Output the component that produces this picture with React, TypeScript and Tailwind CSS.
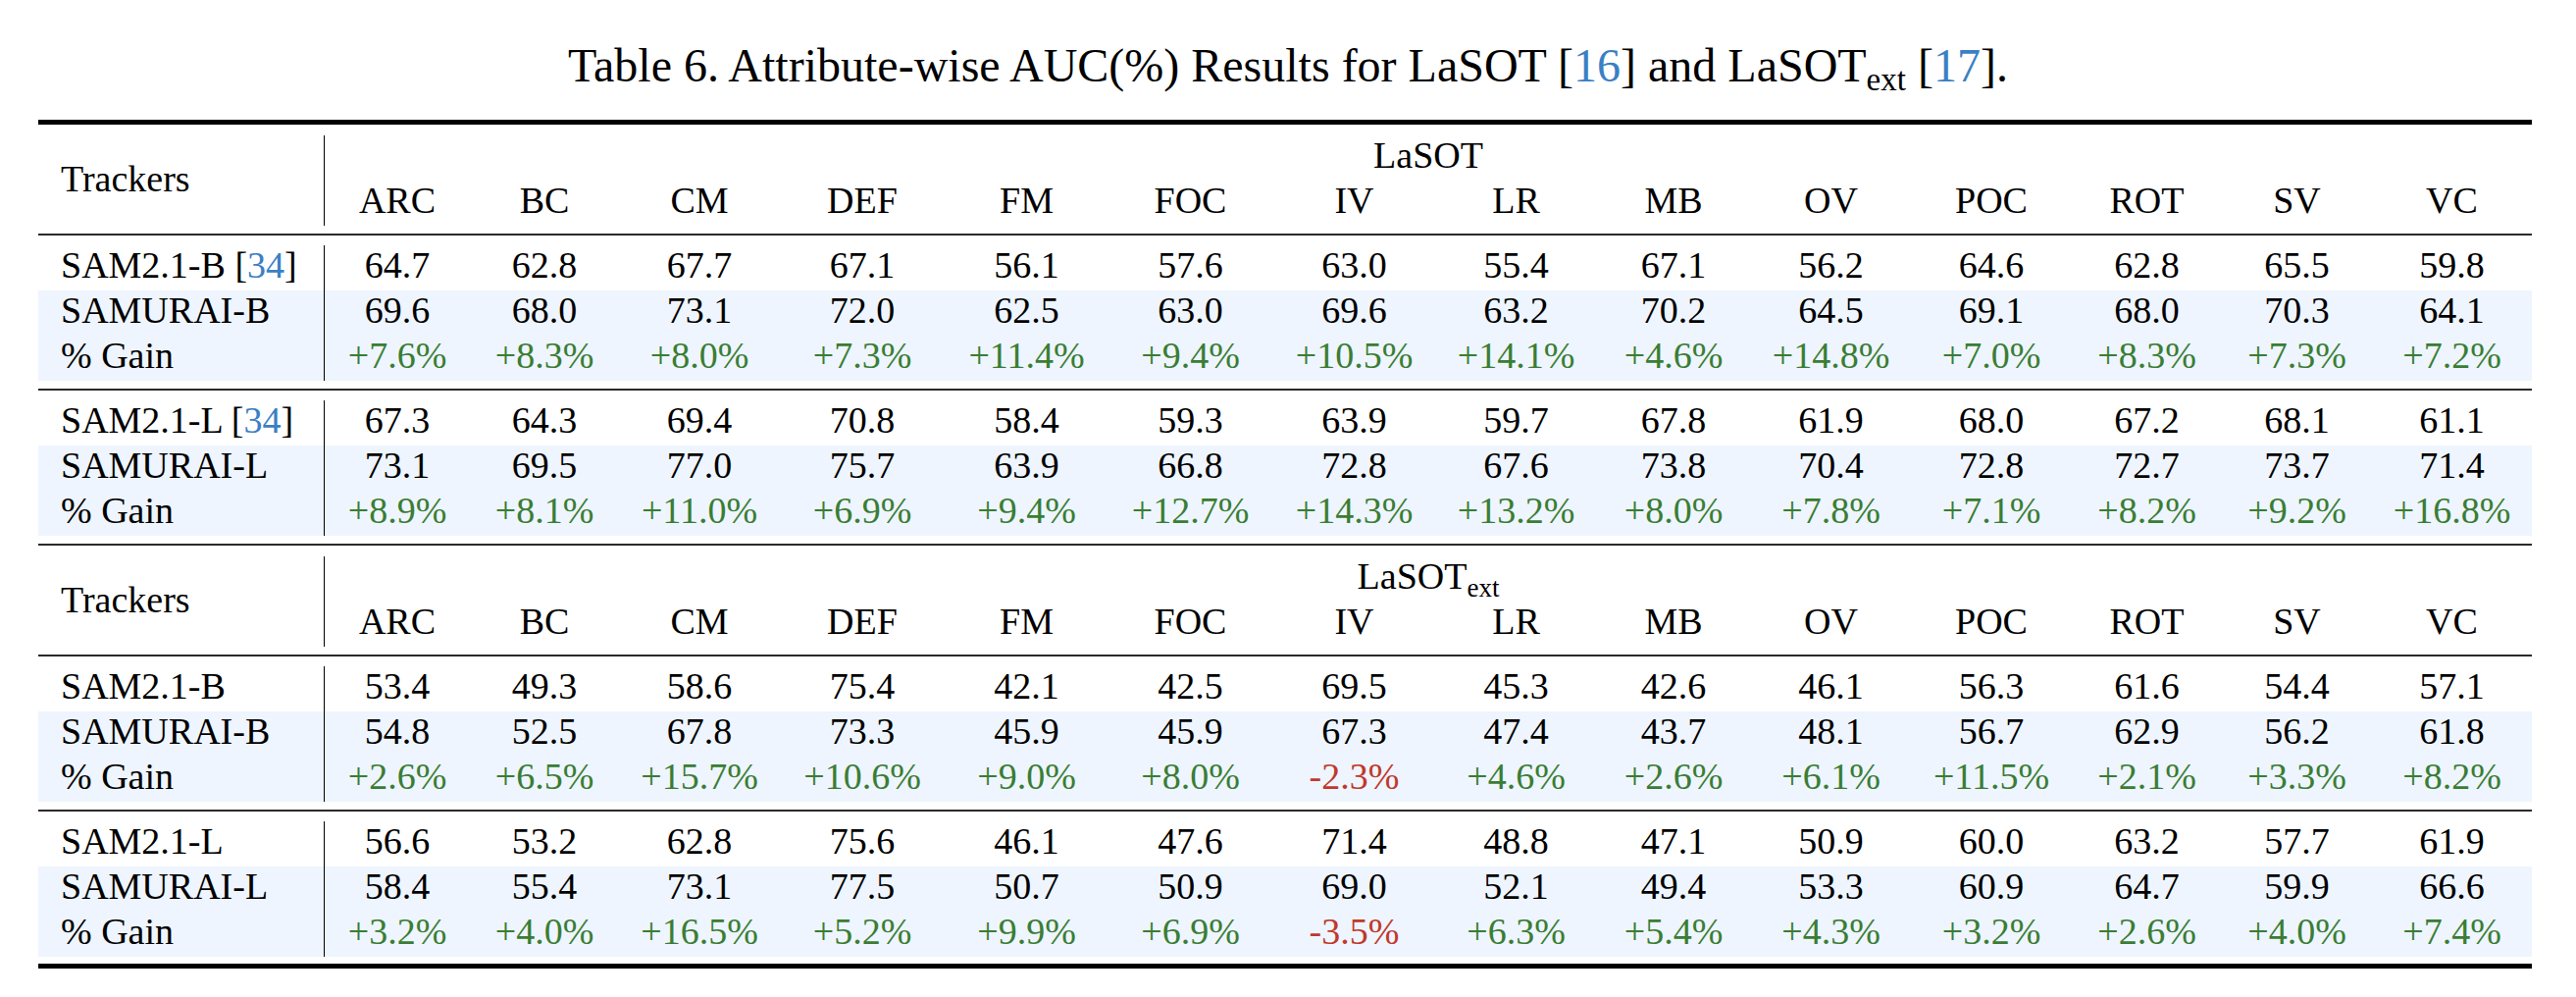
import React from 'react';

const attrs = ['ARC', 'BC', 'CM', 'DEF', 'FM', 'FOC', 'IV', 'LR', 'MB', 'OV', 'POC', 'ROT', 'SV', 'VC'];
// column widths measured from the page, the last one takes what is left
const widths = ['w-[148px]', 'w-[152px]', 'w-[164px]', 'w-[168px]', 'w-[167px]', 'w-[167px]', 'w-[167px]', 'w-[163px]', 'w-[158px]', 'w-[163px]', 'w-[164px]', 'w-[153px]', 'w-[153px]', 'flex-1'];

type Row = { name: string; cite?: string; values: string[]; gain?: boolean };

const lasot: Row[][] = [
  [
    { name: 'SAM2.1-B', cite: '34', values: ['64.7', '62.8', '67.7', '67.1', '56.1', '57.6', '63.0', '55.4', '67.1', '56.2', '64.6', '62.8', '65.5', '59.8'] },
    { name: 'SAMURAI-B', values: ['69.6', '68.0', '73.1', '72.0', '62.5', '63.0', '69.6', '63.2', '70.2', '64.5', '69.1', '68.0', '70.3', '64.1'] },
    { name: '% Gain', gain: true, values: ['+7.6%', '+8.3%', '+8.0%', '+7.3%', '+11.4%', '+9.4%', '+10.5%', '+14.1%', '+4.6%', '+14.8%', '+7.0%', '+8.3%', '+7.3%', '+7.2%'] },
  ],
  [
    { name: 'SAM2.1-L', cite: '34', values: ['67.3', '64.3', '69.4', '70.8', '58.4', '59.3', '63.9', '59.7', '67.8', '61.9', '68.0', '67.2', '68.1', '61.1'] },
    { name: 'SAMURAI-L', values: ['73.1', '69.5', '77.0', '75.7', '63.9', '66.8', '72.8', '67.6', '73.8', '70.4', '72.8', '72.7', '73.7', '71.4'] },
    { name: '% Gain', gain: true, values: ['+8.9%', '+8.1%', '+11.0%', '+6.9%', '+9.4%', '+12.7%', '+14.3%', '+13.2%', '+8.0%', '+7.8%', '+7.1%', '+8.2%', '+9.2%', '+16.8%'] },
  ],
];

const lasotExt: Row[][] = [
  [
    { name: 'SAM2.1-B', values: ['53.4', '49.3', '58.6', '75.4', '42.1', '42.5', '69.5', '45.3', '42.6', '46.1', '56.3', '61.6', '54.4', '57.1'] },
    { name: 'SAMURAI-B', values: ['54.8', '52.5', '67.8', '73.3', '45.9', '45.9', '67.3', '47.4', '43.7', '48.1', '56.7', '62.9', '56.2', '61.8'] },
    { name: '% Gain', gain: true, values: ['+2.6%', '+6.5%', '+15.7%', '+10.6%', '+9.0%', '+8.0%', '-2.3%', '+4.6%', '+2.6%', '+6.1%', '+11.5%', '+2.1%', '+3.3%', '+8.2%'] },
  ],
  [
    { name: 'SAM2.1-L', values: ['56.6', '53.2', '62.8', '75.6', '46.1', '47.6', '71.4', '48.8', '47.1', '50.9', '60.0', '63.2', '57.7', '61.9'] },
    { name: 'SAMURAI-L', values: ['58.4', '55.4', '73.1', '77.5', '50.7', '50.9', '69.0', '52.1', '49.4', '53.3', '60.9', '64.7', '59.9', '66.6'] },
    { name: '% Gain', gain: true, values: ['+3.2%', '+4.0%', '+16.5%', '+5.2%', '+9.9%', '+6.9%', '-3.5%', '+6.3%', '+5.4%', '+4.3%', '+3.2%', '+2.6%', '+4.0%', '+7.4%'] },
  ],
];

function Cite({ n }: { n: string }) {
  return (
    <>
      [<span className="text-[#3b7fc4]">{n}</span>]
    </>
  );
}

function Header({ ext }: { ext?: boolean }) {
  return (
    <div className="pt-[11px] pb-[8px]">
      <div className="flex h-[92px]">
        <div className="w-[292px] shrink-0 border-r-[1.5px] border-black pl-[23px] pt-[24px] leading-[40px]">Trackers</div>
        <div className="flex flex-1 flex-col">
          <div className="h-[46px] text-center leading-[40px]">
            LaSOT{ext && <sub className="text-[27px] align-baseline relative top-[8px]">ext</sub>}
          </div>
          <div className="flex h-[46px] leading-[40px]">
            {attrs.map((a, i) => (
              <div key={a} className={`${widths[i]} text-center`}>
                {a}
              </div>
            ))}
          </div>
        </div>
      </div>
    </div>
  );
}

function Group({ rows, last }: { rows: Row[]; last?: boolean }) {
  return (
    <div className={last ? 'pt-[10px] pb-[7px]' : 'pt-[10px] pb-[8px]'}>
      {rows.map((r, ri) => (
        <div key={ri} className={`flex h-[46px] leading-[40px] ${ri > 0 ? 'bg-[#eef5fe]' : ''}`}>
          <div className="w-[292px] shrink-0 border-r-[1.5px] border-black pl-[23px] whitespace-nowrap">
            {r.name}
            {r.cite && (
              <>
                {' '}
                <Cite n={r.cite} />
              </>
            )}
          </div>
          {r.values.map((v, i) => (
            <div
              key={i}
              className={`${widths[i]} text-center ${r.gain ? (v.startsWith('-') ? 'text-[#c0392b]' : 'text-[#3a7d34]') : ''}`}
            >
              {v}
            </div>
          ))}
        </div>
      ))}
    </div>
  );
}

export default function App() {
  return (
    <div className="min-h-screen w-[2626px] bg-white pt-[41px] font-['Liberation_Serif',serif] text-black">
      <div className="text-center text-[48px] leading-[52px]">
        Table 6. Attribute-wise AUC(%) Results for LaSOT <Cite n="16" /> and LaSOT
        <sub className="text-[33px] align-baseline relative top-[9px]">ext</sub> <Cite n="17" />.
      </div>

      <div className="mt-[29px] ml-[39px] w-[2542px] text-[38px]">
        <div className="h-[5px] bg-black" />
        <Header />
        <div className="h-[2px] bg-[#2a2a2a]" />
        <Group rows={lasot[0]} />
        <div className="h-[2px] bg-[#2a2a2a]" />
        <Group rows={lasot[1]} />
        <div className="h-[2px] bg-[#2a2a2a]" />
        <Header ext />
        <div className="h-[2px] bg-[#2a2a2a]" />
        <Group rows={lasotExt[0]} />
        <div className="h-[2px] bg-[#2a2a2a]" />
        <Group rows={lasotExt[1]} last />
        <div className="h-[5px] bg-black" />
      </div>
    </div>
  );
}
